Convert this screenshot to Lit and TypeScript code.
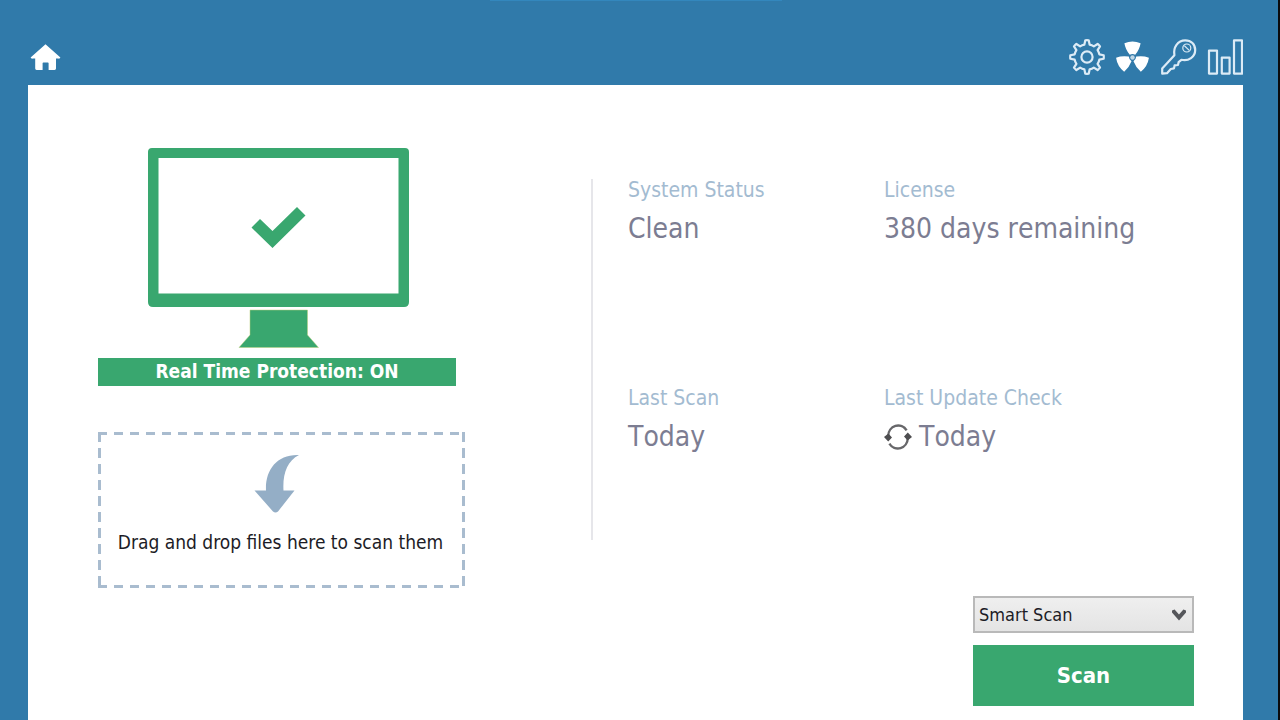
import { LitElement, html, css, svg } from "lit";
import { customElement, state } from "lit/decorators.js";

/** Outline of an eight-toothed cog centred on (18, 18). */
function cogPath(teeth: number, inner: number, outer: number): string {
  const step = (Math.PI * 2) / teeth;
  const at = (r: number, a: number) =>
    `${(18 + r * Math.sin(a)).toFixed(2)} ${(18 - r * Math.cos(a)).toFixed(2)}`;
  let d = "";
  for (let i = 0; i < teeth; i++) {
    const a = i * step;
    d += `${i ? "L" : "M"}${at(inner, a - step * 0.27)}`;
    d += `L${at(outer, a - step * 0.13)}`;
    d += `A${outer} ${outer} 0 0 1 ${at(outer, a + step * 0.13)}`;
    d += `L${at(inner, a + step * 0.27)}`;
    d += `A${inner} ${inner} 0 0 1 ${at(inner, a + step * 0.73)}`;
  }
  return d + "Z";
}

const blade = "M9.4 4.2Q17.5 1 25.6 4.2Q24.6 10.4 20.2 15.8Q17.5 14.4 14.8 15.8Q10.4 10.4 9.4 4.2Z";

const toolIcons = [
  {
    name: "Settings",
    art: svg`<path class="line" d=${cogPath(8, 12.6, 16.8)} /><circle class="line" cx="18" cy="18" r="5.6" />`,
  },
  {
    name: "Threats",
    art: svg`<g class="solid">
      <path d=${blade} />
      <path d=${blade} transform="rotate(120 17.5 18.5)" />
      <path d=${blade} transform="rotate(240 17.5 18.5)" />
      <circle cx="17.5" cy="18.5" r="2.2" opacity="0.7" />
    </g>`,
  },
  {
    name: "License key",
    art: svg`<path class="line" d="M13.4 16.2C12 8.4 16.8 1.3 24.2 1.3C30.2 1.3 34.2 5.4 34.2 11C34.2 18 27.6 22.4 20.4 20.8L17.6 23.2L17 26L13.6 26.4L13 29.4L9.8 30L6 34.2L1.2 34.6L1.2 29.4Z" /><circle class="thin" cx="25.8" cy="9" r="4" /><path class="thin" d="M23.4 6.8L28.2 11.4" />`,
  },
  {
    name: "Statistics",
    art: svg`<path class="line" d="M2 11.6H10V34.6H2ZM14.8 18.6H22.6V34.6H14.8ZM27 1.4H35V34.6H27Z" />`,
  },
];

@customElement("app-root")
export class AppRoot extends LitElement {
  @state() private mode = "Smart Scan";

  static styles = css`
    :host {
      display: flex;
      flex-direction: column;
      box-sizing: border-box;
      min-height: 100vh;
      padding: 0 35px 0 28px;
      border-right: 2px solid #0b0b0d;
      background: #307aaa;
      font-family: "DejaVu Sans Condensed", "DejaVu Sans", sans-serif;
    }
    * {
      box-sizing: border-box;
    }
    svg {
      display: block;
    }
    .edge {
      width: 292px;
      height: 1px;
      margin: 0 auto;
      background: #3387bd;
    }
    .header {
      display: flex;
      justify-content: space-between;
      align-items: center;
      padding: 38px 0 10px;
    }
    .tools {
      display: flex;
      gap: 10px;
    }
    .icon-button {
      padding: 0;
      border: 0;
      background: none;
      cursor: pointer;
    }
    .line,
    .thin {
      fill: none;
      stroke: #dcebf6;
      stroke-width: 2.2;
      stroke-linejoin: round;
    }
    .thin {
      stroke-width: 1.2;
    }
    .solid {
      fill: #fff;
    }
    .panel {
      flex: 1;
      display: flex;
      flex-direction: column;
      padding: 63px 49px 14px 70px;
      background: #fff;
    }
    .overview {
      display: grid;
      grid-template-columns: 367px 128px 1fr;
    }
    .protection {
      width: 358px;
    }
    .monitor {
      margin: 0 auto;
    }
    .green {
      fill: #39a76f;
    }
    .banner {
      height: 28px;
      margin: 10px 0 0;
      background: #39a76f;
      color: #fff;
      font-size: 19px;
      font-weight: bold;
      line-height: 26px;
      text-align: center;
    }
    .drop {
      --dash: #a9bccf;
      display: flex;
      flex-direction: column;
      align-items: center;
      height: 156px;
      margin-top: 46px;
      padding: 22px 2px 0 0;
      background:
        repeating-linear-gradient(90deg, var(--dash) 0 9px, transparent 9px 16px) top / 100% 3px no-repeat,
        repeating-linear-gradient(90deg, var(--dash) 0 9px, transparent 9px 16px) bottom / 100% 3px no-repeat,
        repeating-linear-gradient(var(--dash) 0 10px, transparent 10px 16px) left / 3px 100% no-repeat,
        repeating-linear-gradient(var(--dash) 0 10px, transparent 10px 16px) right / 3px 100% no-repeat;
      color: #1c1c26;
      font-size: 19px;
      line-height: 24px;
      cursor: pointer;
    }
    .drop-arrow {
      margin-bottom: 16px;
    }
    .file {
      position: absolute;
      width: 1px;
      height: 1px;
      opacity: 0;
    }
    .divider {
      justify-self: end;
      width: 2px;
      height: 361px;
      margin-top: 31px;
      background: #e6e6ea;
    }
    .stats {
      display: grid;
      grid-template-columns: 256px 1fr;
      grid-auto-rows: 208px;
      margin: 29px 0 0 35px;
    }
    .stat {
      margin: 0;
    }
    .label {
      color: #a3bbd1;
      font-size: 21px;
      line-height: 26px;
    }
    .value {
      display: flex;
      align-items: center;
      gap: 7px;
      margin: 8px 0 0;
      color: #7c7d92;
      font-size: 28px;
      font-kerning: none;
      line-height: 36px;
    }
    .actions {
      display: flex;
      flex-direction: column;
      gap: 12px;
      width: 221px;
      margin: auto 0 0 auto;
    }
    .picker {
      display: grid;
      align-items: center;
    }
    .select,
    .chevron {
      grid-area: 1 / 1;
    }
    .select {
      appearance: none;
      width: 100%;
      height: 37px;
      padding: 0 4px;
      border: 2px solid #b9b9b9;
      border-radius: 0;
      background: linear-gradient(#efefef, #e4e4e4);
      color: #1c1c26;
      font: 18px "DejaVu Sans Condensed", "DejaVu Sans", sans-serif;
    }
    .chevron {
      justify-self: end;
      margin-right: 8px;
      pointer-events: none;
    }
    .scan {
      height: 61px;
      padding: 0;
      border: 0;
      background: #39a76f;
      color: #fff;
      font: bold 22px "DejaVu Sans Condensed", "DejaVu Sans", sans-serif;
      cursor: pointer;
    }
  `;

  private stat(label: string, value: unknown) {
    return html`<dl class="stat">
      <dt class="label">${label}</dt>
      <dd class="value">${value}</dd>
    </dl>`;
  }

  render() {
    const refresh = html`<svg width="28" height="26" viewBox="0 0 28 26" aria-hidden="true">
      <path fill="none" stroke="#67676a" stroke-width="2.4" d="M4.2 12A10 10.600 0 0 1 22.6 6.4M23.8 14A10 10.600 0 0 1 5.4 19.6" />
      <path fill="#4e4e50" d="M0 13L4.4 9.6L8 13.6L4.2 17.4ZM28 13L23.6 16.4L20 12.4L23.8 8.6Z" />
    </svg>`;

    return html`
      <div class="edge"></div>
      <header class="header">
        <button class="icon-button" aria-label="Home">
          <svg width="34" height="36" viewBox="0 0 34 36">
            <path class="solid" d="M17.5 5.2L32.4 18.6Q31.8 20 30.4 19.6H28V29.6Q28 31 26.6 31H20.6V24.2Q20.6 23.4 19.8 23.4H15.4Q14.6 23.4 14.6 24.2V31H8.6Q7.2 31 7.2 29.6V19.6H4.8Q3.2 20 2.6 18.6Z" />
          </svg>
        </button>
        <nav class="tools">
          ${toolIcons.map(
            (icon) => html`<button class="icon-button" aria-label=${icon.name}>
              <svg width="36" height="36" viewBox="0 0 36 36">${icon.art}</svg>
            </button>`
          )}
        </nav>
      </header>
      <main class="panel">
        <div class="overview">
          <section>
            <div class="protection">
              <svg class="monitor" width="260" height="200" viewBox="-1 0 260 200" overflow="visible" aria-hidden="true">
                <path class="green" fill-rule="evenodd" d="M4 0H257Q261 0 261 4V154Q261 159 256 159H5Q0 159 0 154V4Q0 0 4 0ZM10.5 10V145.5H250.5V10Z" />
                <path class="green" d="M103.5 79.5L112 71L124.5 83L149 59L157.5 67.5L124.5 100Z" />
                <path d="M102 162V187L91 199.5H170.5L159.5 187V162Z" fill="#39a76f" stroke="#b9cf7a" stroke-width="0.5" />
              </svg>
              <p class="banner">Real Time Protection: ON</p>
            </div>
            <label class="drop">
              <input class="file" type="file" multiple />
              <svg class="drop-arrow" width="56" height="60" viewBox="0 0 56 60" aria-hidden="true">
                <path fill="#94aec6" d="M46 1C34 7 29.5 20 30.5 36.5H41.5L25 57.5Q22.5 59.5 20 57.5L1.5 36.5H13C12 16 24 0 46 1Z" />
              </svg>
              <span>Drag and drop files here to scan them</span>
            </label>
          </section>
          <div class="divider"></div>
          <section class="stats">
            ${this.stat("System Status", "Clean")}
            ${this.stat("License", "380 days remaining")}
            ${this.stat("Last Scan", "Today")}
            ${this.stat("Last Update Check", html`${refresh}<span>Today</span>`)}
          </section>
        </div>
        <div class="actions">
          <div class="picker">
            <select
              class="select"
              aria-label="Scan type"
              .value=${this.mode}
              @change=${(e: Event) => (this.mode = (e.target as HTMLSelectElement).value)}
            >
              <option>Smart Scan</option>
              <option>Full Scan</option>
              <option>Custom Scan</option>
            </select>
            <svg class="chevron" width="14" height="12" viewBox="0 0 14 12" aria-hidden="true">
              <path fill="#55565a" d="M0 1.4L2.6 0.6L7 5.6L11.4 0.6L14 1.4V3.6L7 11.6L0 3.6Z" />
            </svg>
          </div>
          <button class="scan">Scan</button>
        </div>
      </main>
    `;
  }
}
